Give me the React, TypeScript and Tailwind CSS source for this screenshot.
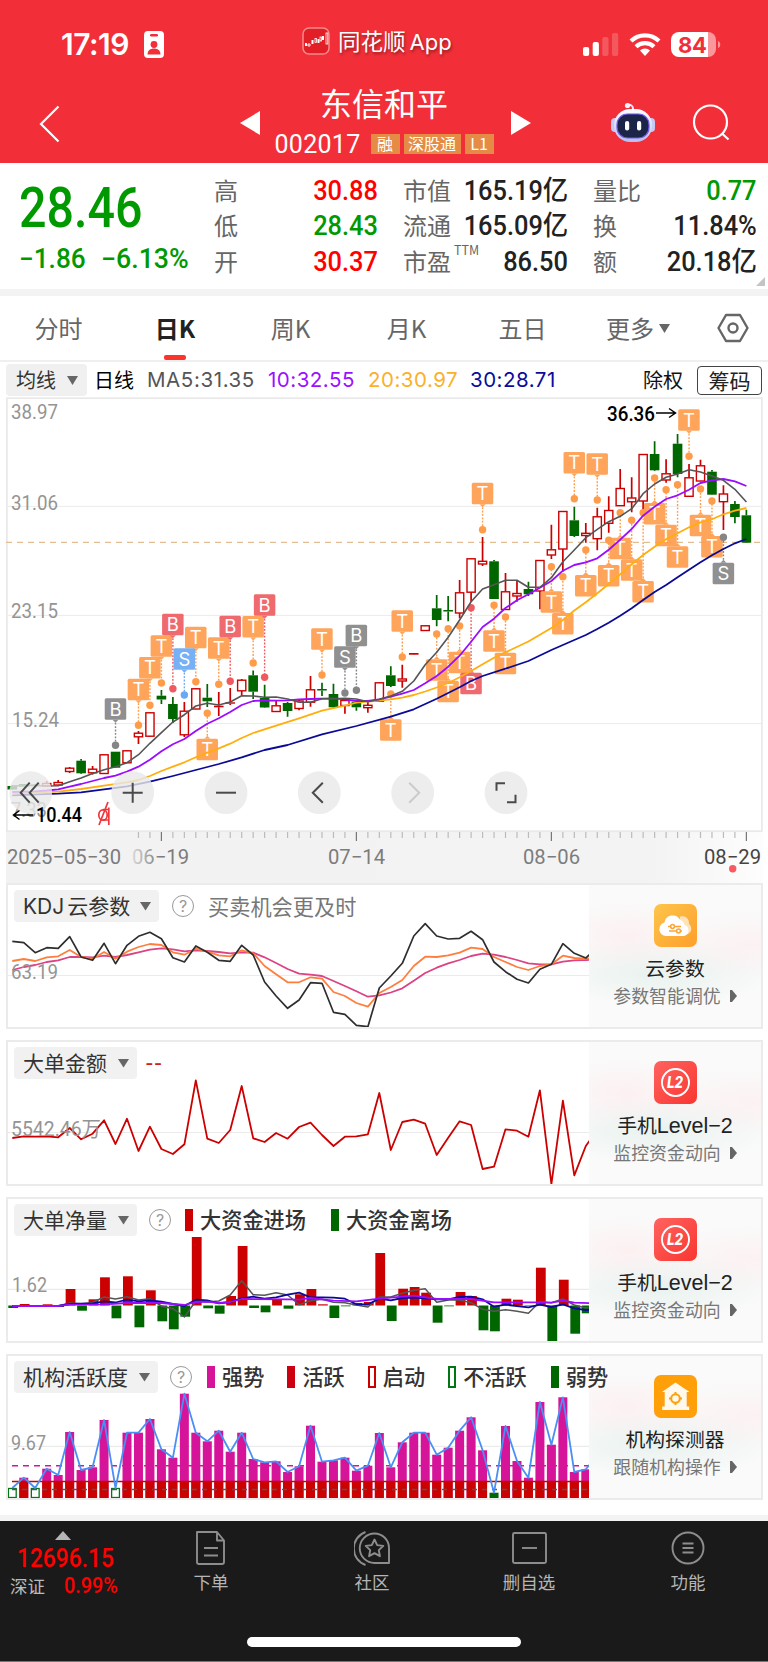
import type { ReactNode } from "react";

type Point = [number, number];
// r = rising (hollow), g = falling (filled): [kind, high, top, bottom, low]
type Candle = ["r" | "g", number, number, number, number];
// index, letter, colour, top of the box, centre of the dot
type Marker = [number, string, string, number, number];

const STEP = 11.47;
const cx = (i: number) => 12.3 + i * STEP;
const line = (ys: number[]) => ys.map((y, i) => `${cx(i).toFixed(1)},${y}`).join(" ");
const sparse = (ps: Point[]) => ps.map(([i, y]) => `${cx(i).toFixed(1)},${y}`).join(" ");

const RED = "#cc0000";
const GREEN = "#006600";
const ORANGE = "#ff9c4a";
const ROSE = "#ee5a60";
const GREY = "#858585";
const BLUE = "#69a8f4";
const MAGENTA = "#d6149a";

const candles: Candle[] = [
  ["g", 785, 786, 789.5, 790], ["g", 784, 784, 786.7, 787], ["g", 784, 784.5, 786, 787], ["r", 781, 783.5, 786, 787],
  ["r", 780, 782.5, 785, 785], ["r", 767, 768.2, 771.5, 773], ["g", 759, 760.7, 773.3, 774], ["r", 766, 769.2, 772.8, 774.5],
  ["r", 754, 754.8, 773.5, 774], ["g", 751.7, 751.7, 767.7, 768], ["r", 750, 750.8, 762.8, 763], ["r", 731, 733.2, 736.8, 744],
  ["r", 712, 712.8, 736.2, 737], ["g", 690, 695.7, 699.5, 704], ["g", 697, 704, 719, 723], ["r", 702, 711.2, 734.8, 737],
  ["r", 688, 688.8, 709, 709.3], ["g", 684, 697.7, 701.3, 707], ["r", 692, 705.7, 707.3, 716], ["r", 688, 702.3, 703.7, 705],
  ["r", 679, 680.2, 690.8, 695], ["g", 670.5, 675.3, 691.7, 699], ["g", 684.7, 698, 707.5, 708], ["r", 700, 705.8, 711.5, 712],
  ["g", 702, 703, 711, 716.7], ["r", 700, 701, 708.5, 710.3], ["r", 676, 689.8, 702.2, 706.7], ["g", 682.7, 689, 690.5, 696],
  ["g", 683.7, 694, 707.3, 708], ["r", 699, 700.5, 705.5, 713.7], ["g", 700, 701.7, 707.3, 710.7], ["r", 700, 705.3, 707.7, 712.7],
  ["r", 682, 682.8, 701.2, 702], ["g", 666.3, 675.3, 686, 687], ["r", 664.7, 679, 681, 687.7], ["r", 653, 653, 654.7, 655],
  ["r", 625, 625.8, 630.5, 631], ["g", 595, 608.3, 620, 626.3], ["g", 596, 610, 611.5, 621.3], ["r", 580, 592.8, 613, 618.3],
  ["r", 558, 558.8, 592.2, 601.7], ["r", 537, 561.3, 564, 566], ["g", 560, 561.3, 599, 599], ["r", 573, 591.8, 609.5, 610],
  ["r", 581, 593.5, 596, 601.7], ["g", 581.7, 589, 594.3, 596], ["r", 560, 560.5, 591, 609.3], ["r", 524.7, 549.8, 555, 559],
  ["r", 511, 511.5, 549, 571.7], ["g", 506.7, 520.3, 536, 537], ["r", 523, 533.3, 535.5, 542.7], ["r", 507.7, 516.8, 538.7, 550.3],
  ["r", 496.3, 510.5, 523.3, 532.7], ["r", 469, 488.5, 505.7, 506], ["r", 477.3, 498, 501.8, 512.3], ["r", 454, 454.5, 501, 511.7],
  ["g", 441.3, 454, 470.3, 471], ["r", 459.3, 473.8, 480, 482.7], ["g", 434, 443.7, 474, 477.3], ["r", 464, 477.8, 496.3, 497],
  ["r", 459.7, 465.8, 481, 481.3], ["g", 470, 471.7, 494.7, 495], ["r", 485.3, 494, 501.7, 530], ["g", 501, 504, 517, 523.3],
  ["g", 509.7, 515.3, 542.7, 543],
];

const ma5 = [
  786, 785.5, 785.5, 786, 785.7, 781.7, 778, 773.5, 769.7, 766.7, 762.7, 754.7, 743.3, 732.7, 722, 714.7, 706, 703.3, 705, 702,
  695.7, 696, 697.3, 697, 699, 702.3, 702.3, 698.7, 698.7, 698.3, 699, 701.7, 699.3, 696, 691.3, 681, 664.7, 652.3, 637.3, 620,
  601.7, 589, 584.7, 580.3, 580.3, 587.3, 587.3, 577.7, 561.7, 550, 537.7, 529.3, 521.7, 516.3, 508.7, 493.7, 484, 477.3, 474,
  469.7, 472, 476, 480.3, 489.3, 502,
];
const ma10 = [
  792, 791.7, 791.3, 790.5, 789.3, 786.7, 784, 781, 778, 775.7, 771.7, 766.7, 759.7, 751.3, 744.3, 739, 731, 723.7, 718.3, 712,
  705, 701, 700.5, 700.7, 700.3, 699.3, 699, 698.7, 698.3, 699.3, 701, 701, 699.3, 696.7, 693.7, 690, 683.3, 676, 666.7, 655.7,
  641.7, 627, 618.7, 608, 600.3, 594.3, 587.7, 581, 570.7, 565, 562.3, 558.3, 549.7, 539.7, 529, 515.7, 506.7, 499, 495.3, 489.7,
  483, 480.3, 479, 481.3, 486,
];
const ma20: Point[] = [
  [0, 793.7], [4, 791.7], [6, 789], [8, 785.7], [10, 782.3], [11, 780], [12, 776], [13, 771], [14, 766.7], [15, 762.3],
  [16, 757.3], [17, 752.7], [18, 748.3], [19, 743.7], [20, 738], [21, 733], [23, 725.7], [25, 718.3], [27, 710.7], [29, 705.7],
  [30, 702.7], [31, 701.7], [32, 700.7], [33, 699.3], [34, 697.7], [35, 695], [36, 691.5], [37, 687.5], [38, 683], [39, 677.3],
  [40, 671], [41, 664.3], [42, 657.7], [43, 652.3], [45, 641.5], [47, 628], [48, 620], [49, 610.5], [50, 602.3], [51, 593.3],
  [52, 584], [53, 574.3], [54, 564.3], [55, 555], [56, 546.7], [57, 539.3], [58, 533.3], [59, 527.3], [60, 522.3], [61, 519.3],
  [62, 514.3], [63, 510.7], [64, 508],
];
const ma30: Point[] = [
  [0, 795.3], [4, 793.7], [6, 792.3], [8, 789.3], [10, 786.3], [12, 781.7], [14, 776], [16, 770], [18, 764], [20, 757.3],
  [22, 750], [24, 745], [27, 734.3], [30, 726], [33, 716.7], [35, 709.3], [37, 698.7], [39, 687.3], [40, 681], [41, 676],
  [43, 668.7], [45, 661], [47, 650], [49, 640], [50, 635], [51, 629], [52, 622.7], [53, 615.7], [54, 608.3], [55, 600],
  [56, 592], [57, 585], [58, 577.3], [59, 569.7], [60, 562.3], [61, 555.3], [62, 549], [63, 543.3], [64, 539],
];

const markers: Marker[] = [
  [9, "B", GREY, 698.3, 745.3], [11, "T", ORANGE, 678.7, 725.3], [12, "T", ORANGE, 657, 705.3], [13, "T", ORANGE, 635.3, 683],
  [14, "B", ROSE, 613.7, 688.7], [16, "T", ORANGE, 626.7, 681.7], [15, "S", BLUE, 648.3, 695], [17, "T", ORANGE, 738.7, 713.3],
  [18, "T", ORANGE, 637.3, 684.3], [19, "B", ROSE, 615.7, 681.3], [21, "T", ORANGE, 616, 663], [22, "B", ROSE, 594.3, 677.3],
  [27, "T", ORANGE, 628.3, 675], [29, "S", GREY, 646.3, 693], [30, "B", GREY, 624.7, 690.3], [33, "T", ORANGE, 719.3, 694],
  [34, "T", ORANGE, 610.3, 657], [37, "T", ORANGE, 659.3, 634], [38, "T", ORANGE, 680.7, 628.7], [39, "T", ORANGE, 651.7, 626],
  [40, "B", ROSE, 672.7, 607.7], [41, "T", ORANGE, 482.7, 529.7], [42, "T", ORANGE, 630.3, 605.3], [43, "T", ORANGE, 652.7, 617],
  [47, "T", ORANGE, 591.3, 566.7], [48, "T", ORANGE, 613, 576.7], [49, "T", ORANGE, 452, 498.7], [50, "T", ORANGE, 575, 550],
  [51, "T", ORANGE, 453.3, 500], [52, "T", ORANGE, 565, 540.3], [53, "T", ORANGE, 537.7, 512.7], [54, "T", ORANGE, 559.3, 520.3],
  [55, "T", ORANGE, 581, 512.7], [56, "T", ORANGE, 503, 478], [57, "T", ORANGE, 524.7, 489.7], [58, "T", ORANGE, 546.3, 484.7],
  [59, "T", ORANGE, 409.3, 456.3], [60, "T", ORANGE, 514.7, 489], [61, "T", ORANGE, 536, 501], [62, "S", GREY, 562.7, 537.3],
];

const kdjJ = [
  941.3, 942.7, 952.7, 947.7, 948.3, 936.7, 957, 960.3, 943.3, 963.7, 945.3, 936.3, 932.3, 938.7, 957.7, 962, 946, 952.3, 960.3,
  961.3, 945.3, 955, 982, 996, 1008.3, 1000, 982.7, 983.3, 1012.3, 1014.3, 1025.3, 1026.7, 988, 976, 963.3, 936, 923.7, 936, 939,
  938.3, 931.3, 939.7, 962, 971.7, 979.3, 983, 969.3, 964.3, 943.7, 953.3, 958, 948,
];
const kdjK = [
  961, 959, 961, 957.3, 956.3, 950, 957, 959, 952, 958.7, 951.7, 947, 944, 945, 952.3, 954.7, 948.7, 951.7, 955.3, 956.3, 950.3,
  953.3, 966, 974.3, 982.3, 982.3, 977.3, 978.7, 992, 996, 1003, 1006.7, 993, 987, 980, 966, 956.7, 957, 955.3, 952.7, 947.7, 949,
  957, 962, 967, 970, 966, 964.3, 955.7, 958, 958.7, 958,
];
const kdjD = [
  970, 967, 965, 962, 960.3, 957, 957, 957.3, 955.7, 957, 955, 952.3, 949.7, 948.3, 949.3, 951.3, 950.3, 951, 952, 953.3, 952.3,
  952.7, 957.3, 963, 969, 973.7, 974.7, 976, 981, 986, 991.3, 996.7, 995.3, 992.5, 988.3, 980.7, 973, 967.7, 963.3, 960, 956,
  953.7, 954.7, 957, 960, 963.3, 964.3, 964.3, 961.7, 960.3, 960, 959.3,
];
const bigOrders = [
  1138, 1136.3, 1136.7, 1136.3, 1137.3, 1128, 1139.3, 1133.7, 1120.3, 1144, 1118.7, 1151, 1126.7, 1149, 1154, 1144.3, 1080.3,
  1138.7, 1143, 1130, 1086, 1138.3, 1142, 1133, 1138.7, 1127, 1122.7, 1135, 1146, 1136.7, 1136.3, 1134.3, 1093, 1150, 1122,
  1119.7, 1123.7, 1155, 1137.7, 1121.3, 1125, 1169, 1166.7, 1129.3, 1130.7, 1136.7, 1090.3, 1184, 1100.7, 1175.3, 1146, 1130,
];
const ZERO = 1305.5;
const netBars = [
  1308, 1304, 1305.5, 1304.3, 1307, 1289, 1310.7, 1299.3, 1277.3, 1318.3, 1276.3, 1327.3, 1290.3, 1321.3, 1329.3, 1316.7, 1237,
  1308.3, 1313.7, 1296, 1246, 1308, 1312.3, 1299.3, 1308.7, 1294.3, 1289, 1304.3, 1318, 1306.3, 1303, 1302, 1253, 1321, 1288.7,
  1287, 1292.7, 1322.7, 1306.3, 1292, 1296, 1330.3, 1331.3, 1298.7, 1299.7, 1305, 1267.7, 1341.3, 1279.7, 1333.7, 1313.3, 1308,
];
const netGrey = [
  1306, 1306, 1306, 1306, 1306, 1303, 1303.7, 1302.5, 1297, 1299, 1296.7, 1300, 1298.7, 1306, 1308.7, 1317, 1301, 1302, 1301, 1295,
  1280.7, 1294.7, 1295.3, 1292.7, 1295, 1304.7, 1300.7, 1299.3, 1302.3, 1302.7, 1305, 1307, 1297, 1297, 1293.3, 1290.3, 1288.7,
  1302.3, 1300, 1300, 1302.7, 1309.3, 1311.3, 1309.7, 1311.3, 1313.3, 1301.7, 1302.7, 1299, 1305, 1308, 1306,
];
const netBlue = [
  1306, 1306, 1306, 1306, 1306, 1304, 1303.7, 1303.3, 1301.3, 1302.5, 1299.7, 1301.3, 1300.3, 1301.7, 1304, 1306, 1299.7, 1300.3,
  1303.3, 1302, 1298.3, 1296.7, 1298.7, 1297.3, 1294.7, 1292.7, 1297.3, 1297.3, 1297.7, 1298.7, 1304.3, 1304.3, 1298.7, 1300.3,
  1298, 1297.7, 1298.3, 1299.3, 1299.3, 1297, 1296.7, 1299.3, 1306.7, 1304.7, 1306, 1307.3, 1304.7, 1307, 1304.3, 1308.3, 1310,
  1309,
];
const netPurple: Point[] = [
  [0, 1306], [4, 1306], [5, 1304.7], [8, 1304.3], [10, 1303], [13, 1303], [15, 1305], [16, 1302], [17, 1301.7], [18, 1303],
  [19, 1302], [20, 1299], [24, 1299.3], [25, 1299.7], [26, 1298], [28, 1300.7], [30, 1301.3], [32, 1298.7], [35, 1295.7],
  [37, 1299], [40, 1299], [42, 1302.3], [46, 1302.3], [47, 1302.7], [48, 1300.7], [49, 1302.7], [51, 1303.5],
];
const instTops = [
  1488, 1477.7, 1488, 1468.7, 1475, 1432, 1470, 1467.3, 1420, 1488, 1432.7, 1432.7, 1419, 1449.3, 1457.7, 1393.7, 1432.7, 1441.3,
  1430.7, 1451.7, 1432.7, 1459, 1462.3, 1461.3, 1472, 1466.3, 1425.7, 1461.7, 1460.3, 1457.7, 1470.7, 1465.7, 1433, 1467.3,
  1442.3, 1432.7, 1432.7, 1454.7, 1447.7, 1430.7, 1417.3, 1450.3, 1492.7, 1426, 1461, 1477.7, 1402, 1444.7, 1397.3, 1472, 1469.3,
  1455,
];

function Num({ children, className = "" }: { children: ReactNode; className?: string }) {
  return <span className={`inline-block whitespace-nowrap font-[Roboto,'Noto_Sans_CJK_SC',sans-serif] ${className}`}>{children}</span>;
}

function SvgNum({ x, y, w, fill = "#949494", size = 21, weight = 400, children }: {
  x: number; y: number; w: number; fill?: string; size?: number; weight?: number; children: ReactNode;
}) {
  return (
    <text x={x} y={y} fill={fill} fontSize={size} fontWeight={weight} textLength={w} lengthAdjust="spacingAndGlyphs" fontFamily="Roboto, 'Noto Sans CJK SC', sans-serif">
      {children}
    </text>
  );
}

function Line({ points, stroke, width = 1.8 }: { points: string; stroke: string; width?: number }) {
  return <polyline points={points} fill="none" stroke={stroke} strokeWidth={width} strokeLinejoin="round" />;
}

function StatusBar() {
  return (
    <div className="flex h-[87px] items-center text-white">
      <div className="ml-[61px] w-[74px] whitespace-nowrap text-[30px] leading-none font-semibold font-[Inter,sans-serif] tracking-[-0.5px]">17:19</div>
      <svg className="ml-[9px] mt-px" width="20" height="27" viewBox="0 0 20 27">
        <rect width="20" height="27" rx="4" fill="#fff" />
        <rect x="6" y="3" width="8" height="2.4" rx="1.2" fill="#f22f38" />
        <circle cx="10" cy="13.5" r="3.4" fill="#f22f38" />
        <path d="M3.5 23.5c0-4 2.8-6 6.500-6s6.500 2 6.500 6z" fill="#f22f38" />
      </svg>
      <svg className="ml-[138px] mb-1.5" width="28" height="28" viewBox="0 0 28 28">
        <rect x="1" y="1" width="26" height="26" rx="6" fill="#e21f26" stroke="#f58a8d" strokeWidth="1.5" />
        <path d="M4 19v-3M10.500 17v-4M16.500 16v-4M21 13V9" stroke="#fff" strokeWidth="2" />
        <circle cx="7" cy="18" r="1.200" fill="none" stroke="#fff" />
        <rect x="13" y="11.500" width="1.500" height="4" fill="none" stroke="#fff" strokeWidth="0.8" />
        <rect x="18" y="10" width="1.500" height="4" fill="none" stroke="#fff" strokeWidth="0.8" />
        <rect x="24" y="6" width="1.800" height="11" fill="none" stroke="#fff" strokeWidth="0.8" />
      </svg>
      <div className="ml-[8px] mb-1.5 w-[120px] whitespace-nowrap text-[22.500px] leading-none font-['Noto_Sans_CJK_SC',sans-serif] [text-shadow:1px_2px_3px_rgba(0,0,0,0.4)]">
        同花顺<span className="ml-1 font-[Inter] text-[22px]">App</span>
      </div>
      <svg className="ml-[125px]" width="140" height="28" viewBox="0 0 140 28">
        <rect x="0" y="17" width="6.200" height="9" rx="2" fill="#fff" />
        <rect x="9.700" y="12" width="6.200" height="14" rx="2" fill="#fff" />
        <rect x="19.300" y="7" width="6.200" height="19" rx="2" fill="#fff" opacity=".2" />
        <rect x="29" y="3" width="6.200" height="23" rx="2" fill="#fff" opacity=".2" />
        <g fill="none" stroke="#fff" strokeWidth="4.200">
          <path d="M48 11a20 20 0 0 1 28 0" />
          <path d="M53 16.800a13 13 0 0 1 18 0" />
        </g>
        <path d="M62 26l-5-5.500a7.500 7.500 0 0 1 10 0z" fill="#fff" />
        <path d="M96 2h29v25H96a8 8 0 0 1-8-8v-9a8 8 0 0 1 8-8z" fill="#fff" />
        <path d="M125 2a8 8 0 0 1 8 8v9a8 8 0 0 1-8 8z" fill="#fff" opacity=".5" />
        <path d="M135 11c3 1 3 6 0 7z" fill="#fff" opacity=".5" />
        <text x="95" y="22.500" fontSize="22" fontWeight="700" fontFamily="Inter" fill="#f22f38" textLength="29">84</text>
      </svg>
    </div>
  );
}

function Header() {
  return (
    <header className="h-[163px] bg-[#f22f38] text-white">
      <StatusBar />
      <div className="flex h-[74px]">
        <svg className="ml-[38px] mt-[17px]" width="24" height="40" viewBox="0 0 24 40" fill="none" stroke="#fff" strokeWidth="2.200">
          <path d="M20.500 2.500L3 20l17.500 17.500" />
        </svg>
        <svg className="ml-[178px] mt-[24px]" width="20" height="24"><path d="M0 12L20 0v24z" fill="#fff" /></svg>
        <div className="-mt-[3px] ml-[4px] flex w-[240px] flex-col items-center">
          <div className="text-[32px] leading-[36px]">东信和平</div>
          <div className="mt-[13px] flex h-[22px] items-center gap-1 whitespace-nowrap">
            <span className="mr-1.5 text-[25px] leading-none tracking-[0.300px] font-[Roboto]">002017</span>
            <span className="h-5 w-[29px] bg-[#e58b45] text-center text-[16px] leading-[19px]">融</span>
            <span className="h-5 w-[57px] bg-[#e58b45] text-center text-[16px] leading-[19px]">深股通</span>
            <span className="h-5 w-[29px] bg-[#e58b45] text-center text-[16px] leading-[19px]">L1</span>
          </div>
        </div>
        <svg className="ml-[7px] mt-[24px]" width="20" height="24"><path d="M20 12L0 0v24z" fill="#fff" /></svg>
        <svg className="ml-[80px] mt-[14px]" width="44" height="44" viewBox="0 0 44 44">
          <defs>
            <linearGradient id="bot" x1="0" y1="0" x2="0" y2="1">
              <stop offset="0" stopColor="#fff" /><stop offset="1" stopColor="#b9bdf0" />
            </linearGradient>
          </defs>
          <path d="M22 8c0-3-1-4-5-4.500" stroke="#e8e8fa" strokeWidth="2" fill="none" />
          <circle cx="16.500" cy="4.500" r="2.600" fill="#f3f3ff" />
          <rect x="0" y="17" width="8" height="14" rx="4" fill="#c5c8f3" />
          <rect x="36" y="17" width="8" height="14" rx="4" fill="#c5c8f3" />
          <rect x="3" y="8" width="38" height="33" rx="16" fill="url(#bot)" />
          <rect x="6" y="13" width="32" height="24" rx="10.500" fill="#1c2547" stroke="#7159e8" strokeWidth="1.200" />
          <rect x="14" y="20" width="4.200" height="9.500" rx="2.100" fill="#fff" />
          <rect x="26" y="20" width="4.200" height="9.500" rx="2.100" fill="#fff" />
        </svg>
        <svg className="ml-[37px] mt-[16px]" width="40" height="40" viewBox="0 0 40 40" fill="none" stroke="#fff" strokeWidth="2.200">
          <circle cx="18.500" cy="19" r="16.500" />
          <path d="M30 30.500l6.500 6" />
        </svg>
      </div>
    </header>
  );
}

function Quote({ label, sup, value, color }: { label: string; sup?: string; value: string; color: string }) {
  return (
    <div className="flex h-[35.500px] items-center justify-between">
      <span className="flex text-[24px] leading-none text-[#666]">
        {label}
        {sup && <sup className="ml-[3px] mt-px text-[12.500px] leading-none">{sup}</sup>}
      </span>
      <Num className={`mt-[3px] origin-right scale-x-[0.94] text-[27px] leading-none font-medium ${color}`}>{value}</Num>
    </div>
  );
}

function QuotePanel() {
  return (
    <section className="flex h-[126px] pt-[9px]">
      <div className="ml-[19px] w-[195px] text-[#009900]">
        <Num className="mt-[11px] block origin-left scale-x-[0.88] text-[55px] leading-[50px] font-medium">28.46</Num>
        <div className="mt-[13px] flex">
          <Num className="w-[82px] origin-left scale-x-[0.97] text-[27px] leading-none font-medium">−1.86</Num>
          <Num className="origin-left scale-x-[0.99] text-[27px] leading-none font-medium">−6.13%</Num>
        </div>
      </div>
      <div className="w-[164px]">
        <Quote label="高" value="30.88" color="text-[#ff0000]" />
        <Quote label="低" value="28.43" color="text-[#009900]" />
        <Quote label="开" value="30.37" color="text-[#ff0000]" />
      </div>
      <div className="ml-[25px] w-[165px]">
        <Quote label="市值" value="165.19亿" color="text-[#222]" />
        <Quote label="流通" value="165.09亿" color="text-[#222]" />
        <Quote label="市盈" sup="TTM" value="86.50" color="text-[#222]" />
      </div>
      <div className="ml-[25px] w-[164px]">
        <Quote label="量比" value="0.77" color="text-[#009900]" />
        <Quote label="换" value="11.84%" color="text-[#222]" />
        <Quote label="额" value="20.18亿" color="text-[#222]" />
      </div>
      <svg className="mt-[105px] ml-[-1px]" width="9" height="9"><path d="M9 0v9H0z" fill="#c4c4c4" /></svg>
    </section>
  );
}

function Tabs() {
  return (
    <nav className="flex h-[66px] border-b-2 border-[#efefef] text-[24px] leading-[64px] text-[#666]">
      <span className="w-[117px] text-center">分时</span>
      <span className="flex w-[116px] flex-col items-center font-bold text-[#222]">
        <span className="h-[59px]">日K</span>
        <span className="h-[6px] w-[22px] rounded-[2px] bg-[#fb342d]" />
      </span>
      <span className="w-[115px] text-center">周K</span>
      <span className="w-[117px] text-center">月K</span>
      <span className="w-[115px] text-center">五日</span>
      <span className="ml-[26px]">更多</span>
      <svg className="ml-[5px] mt-[28px]" width="11" height="9"><path d="M0 0h11L5.500 9z" fill="#666" /></svg>
      <svg className="ml-[47px] mt-[17px]" width="32" height="30" viewBox="0 0 32 30" fill="none" stroke="#666" strokeWidth="2.400">
        <path d="M9 2h14l7.500 13L23 28H9L1.500 15z" strokeLinejoin="round" />
        <circle cx="16" cy="15" r="4.500" />
      </svg>
    </nav>
  );
}

function MaRow() {
  return (
    <div className="flex h-[35px] items-center pt-px text-[20px] leading-none whitespace-nowrap">
      <div className="ml-[6px] flex h-[32px] w-[81px] items-center rounded bg-[#f0f0f0] pl-[10px] text-[#333]">
        均线
        <svg className="ml-[11px]" width="11" height="9"><path d="M0 0h11L5.500 9z" fill="#666" /></svg>
      </div>
      <div className="ml-[7px] w-[53px] text-black">日线</div>
      <div className="flex font-[Inter,sans-serif] text-[20.500px]">
        <div className="w-[121px] tracking-[0.600px] text-[#555]">MA5:31.35</div>
        <div className="w-[100px] tracking-[0.500px] text-[#9b10ff]">10:32.55</div>
        <div className="w-[102px] tracking-[0.500px] text-[#fbb02b]">20:30.97</div>
        <div className="w-[173px] tracking-[0.500px] text-[#0b0b9c]">30:28.71</div>
      </div>
      <div className="text-[#111]">除权</div>
      <div className="ml-[14px] flex h-[29px] w-[65px] items-center justify-center rounded-[4px] border-[1.500px] border-[#444] text-[21px] text-[#222]">筹码</div>
    </div>
  );
}

function MarkerTag({ m: [i, letter, color, top, dot] }: { m: Marker }) {
  const x = cx(i);
  const above = top < dot;
  const edge = above ? top + 21.5 : top;
  const tip = above ? edge + 3 : edge - 3;
  return (
    <g>
      <line x1={x} x2={x} y1={tip} y2={dot} stroke={color} strokeWidth="1.400" strokeDasharray="1.800 1.600" />
      <circle cx={x} cy={dot} r="3.700" fill={color} />
      <g opacity=".9">
        <rect x={x - 10.8} y={top} width="21.500" height="21.500" rx="1.500" fill={color} />
        <path d={`M${x - 3} ${edge}h6L${x} ${tip}z`} fill={color} />
      </g>
      <text x={x} y={top + 17.3} textAnchor="middle" fontSize="18.500" fill="#fff" fontFamily="Inter, sans-serif">{letter}</text>
    </g>
  );
}

function RoundButton({ x, children, color = "#4a4a4a" }: { x: number; children: ReactNode; color?: string }) {
  return (
    <g transform={`translate(${x} 792.700)`}>
      <circle r="21.400" fill="#e8e8e8" opacity=".8" />
      <g fill="none" stroke={color} strokeWidth="2">{children}</g>
    </g>
  );
}

function KLineChart() {
  return (
    <svg className="block" width="768" height="486" viewBox="0 397 768 486">
      <defs>
        <linearGradient id="axis" x1="0" x2="1" y1="0" y2="0">
          <stop offset="0" stopColor="#f2f2f2" /><stop offset=".85" stopColor="#f3f3f3" /><stop offset="1" stopColor="#fdfdfd" />
        </linearGradient>
        <linearGradient id="fade" x1="0" x2="1" y1="0" y2="0">
          <stop offset="0" stopColor="#f2f2f2" /><stop offset=".25" stopColor="#f2f2f2" stopOpacity=".8" /><stop offset="1" stopColor="#f2f2f2" stopOpacity="0" />
        </linearGradient>
      </defs>
      <rect x="6" y="831" width="757" height="52" fill="url(#axis)" />
      <rect x="6.900" y="398.200" width="755" height="433" fill="#fff" stroke="#e9e9e9" strokeWidth="1.700" />
      {[506.4, 615.4, 723.6].map((y) => <line key={y} x1="8" x2="761" y1={y} y2={y} stroke="#ebebeb" />)}
      <line x1="6" x2="761" y1="542.400" y2="542.400" stroke="#e3bd94" strokeWidth="1.200" strokeDasharray="6 5" />
      <SvgNum x={11} y={419.2} w={47}>38.97</SvgNum>
      <SvgNum x={11} y={509.5} w={47}>31.06</SvgNum>
      <SvgNum x={11} y={618} w={47}>23.15</SvgNum>
      <SvgNum x={12} y={727} w={47}>15.24</SvgNum>
      <SvgNum x={11} y={817} w={36}>7.33</SvgNum>

      {candles.map(([kind, hi, top, bottom, lo], i) => {
        const x = cx(i);
        const color = kind === "r" ? RED : GREEN;
        return (
          <g key={i} stroke={color}>
            <path d={`M${x} ${hi}V${top}M${x} ${bottom}V${lo}`} strokeWidth="1.700" fill="none" />
            {kind === "g" || bottom - top < 2
              ? <rect x={x - 4.8} y={top} width="9.600" height={bottom - top} fill={color} stroke="none" />
              : <rect x={x - 4.1} y={top} width="8.200" height={bottom - top} fill="#fff" strokeWidth="1.400" />}
          </g>
        );
      })}
      {markers.map((m) => <MarkerTag key={m[0]} m={m} />)}
      <Line points={sparse(ma30)} stroke="#0a0a96" />
      <Line points={sparse(ma20)} stroke="#ffae0c" />
      <Line points={line(ma10)} stroke="#9a0cff" />
      <Line points={line(ma5)} stroke="#555" width={1.6} />

      <SvgNum x={607} y={421} w={48} fill="#000" weight={500}>36.36</SvgNum>
      <path d="M656 413h19M669 408.500l6.500 4.500-6.500 4.500" fill="none" stroke="#000" strokeWidth="1.500" />

      <RoundButton x={30.7}><path d="M-1-10L-10 0-1 10M8-10L-1 0 8 10" /></RoundButton>
      <RoundButton x={132.7}><path d="M-10 0H10M0-10V10" /></RoundButton>
      <RoundButton x={226}><path d="M-10 0H10" /></RoundButton>
      <RoundButton x={319.3}><path d="M3.500-10L-6.500 0 3.500 10" /></RoundButton>
      <RoundButton x={412.7} color="#cbcbcb"><path d="M-3.500-10L6.500 0-3.500 10" /></RoundButton>
      <RoundButton x={506}><path d="M-9.500-2V-9.500H-1M9.500 2V9.500H1" /></RoundButton>

      <path d="M33 815H14M19.500 810.500l-6 4.500 6 4.500" fill="none" stroke="#000" strokeWidth="1.500" />
      <SvgNum x={36} y={822} w={46} fill="#000" weight={500}>10.44</SvgNum>
      <g fill="none" stroke="#f0343a" strokeWidth="1.700">
        <ellipse cx="103" cy="815" rx="4.200" ry="5.200" />
        <path d="M108.800 807.500V825M99 825l9-23M103 809.500h5.800M103 820h5.800" />
      </g>

      {candles.map((_, i) => i > 10 && (
        <line key={i} x1={cx(i)} x2={cx(i)} y1="832" y2={(i - 13) % 17 === 0 ? 841 : 838} stroke={(i - 13) % 17 === 0 ? "#777" : "#bbb"} strokeWidth="1.200" />
      ))}
      <SvgNum x={132} y={863.5} w={57} fill="#7c7c7c">06−19</SvgNum>
      <rect x="122" y="842" width="38" height="36" fill="url(#fade)" />
      <SvgNum x={7} y={863.5} w={114} fill="#7c7c7c">2025−05−30</SvgNum>
      <SvgNum x={328} y={863.5} w={57} fill="#7c7c7c">07−14</SvgNum>
      <SvgNum x={523} y={863.5} w={57} fill="#7c7c7c">08−06</SvgNum>
      <SvgNum x={704} y={863.5} w={57} fill="#444">08−29</SvgNum>
      <circle cx="732.700" cy="868.800" r="3.700" fill="#fa5a5f" />
    </svg>
  );
}

function Chip({ label, width }: { label: ReactNode; width: string }) {
  return (
    <div className={`ml-[6px] flex h-8 shrink-0 items-center justify-between rounded bg-[#f1f1f1] pl-[9px] pr-[8px] ${width}`}>
      <span className="-mt-px">{label}</span>
      <svg width="11" height="9"><path d="M0 0h11L5.500 8.500z" fill="#666" /></svg>
    </div>
  );
}

function Help({ className }: { className: string }) {
  return (
    <span className={`flex size-[22px] shrink-0 items-center justify-center rounded-full border-[1.500px] border-[#999] text-[16px] leading-none text-[#999] font-[Inter] ${className}`}>?</span>
  );
}

function Legend({ label, fill, className }: { label: string; fill: string; className: string }) {
  return (
    <span className={`-mt-[3px] flex items-center text-[21.200px] ${className}`}>
      <span className={`mt-[3px] mr-[7px] h-[22px] w-[8px] ${fill}`} />
      <span className="font-medium">{label}</span>
    </span>
  );
}

function Promo({ icon, title, subtitle }: { icon: ReactNode; title: ReactNode; subtitle: string }) {
  return (
    <div className="col-start-2 row-start-1 flex flex-col items-center bg-[#fafafa] bg-[radial-gradient(ellipse_75px_34px_at_22%_36%,rgba(255,228,230,0.45),transparent),radial-gradient(ellipse_100px_34px_at_95%_42%,rgba(255,228,230,0.4),transparent),radial-gradient(ellipse_120px_34px_at_40%_62%,rgba(228,240,236,0.8),transparent)] pt-[19px] whitespace-nowrap">
      <svg width="43" height="43" viewBox="0 0 43 43">{icon}</svg>
      <div className="mt-[11px] text-[19.800px] leading-[22px] text-[#222] font-['Liberation_Sans','Noto_Sans_CJK_SC',sans-serif]">{title}</div>
      <div className="mt-[5px] flex items-center text-[17.900px] leading-[20px] text-[#777]">
        {subtitle}
        <svg className="mt-px ml-[9px]" width="7" height="12"><path d="M0 0h2l5 6-5 6H0z" fill="#666" /></svg>
      </div>
    </div>
  );
}

function Panel({ top, grid, header, promo, children }: {
  top: number; grid: number; header: ReactNode; promo: ReactNode; children: ReactNode;
}) {
  return (
    <section className="ml-[6px] grid h-[146px] w-[757px] grid-cols-[581px_172px] border-2 border-[#ebebeb] text-[21px] leading-none whitespace-nowrap text-[#333]">
      <svg className="col-start-1 row-start-1" width="581" height="142" viewBox={`8 ${top + 2} 581 142`}>
        <line x1="8" x2="589" y1={grid} y2={grid} stroke="#ebebeb" strokeWidth="1.200" />
        {children}
      </svg>
      {promo}
      <div className="z-10 col-span-2 col-start-1 row-start-1 flex h-[42px] items-center">{header}</div>
    </section>
  );
}

const cloudIcon = (
  <>
    <defs><linearGradient id="cloud" x1="0" y1="0" x2="1" y2="1"><stop stopColor="#fdc54c" /><stop offset="1" stopColor="#fd9f2b" /></linearGradient></defs>
    <rect width="43" height="43" rx="7" fill="url(#cloud)" />
    <path d="M26 12.500a7 7 0 0 1 9 7.500 6 6 0 0 1-1 10h-9z" fill="#ffe2b5" />
    <path d="M12 32a6.800 6.800 0 0 1-1.500-13.400 8.300 8.300 0 0 1 15.500-2.800 7 7 0 0 1 4.500 5.200 5.700 5.700 0 0 1-.500 11z" fill="#fff" />
    <g stroke="#fca535" strokeWidth="1.500" fill="#fff"><path d="M14 22.500h13M15 27h13" /><circle cx="18.500" cy="22.500" r="1.900" /><circle cx="24.500" cy="27" r="1.900" /></g>
  </>
);
const l2Icon = (id: string) => (
  <>
    <defs><linearGradient id={id} x1="0" y1="0" x2="1" y2="1"><stop stopColor="#ff6360" /><stop offset="1" stopColor="#f93630" /></linearGradient></defs>
    <rect width="43" height="43" rx="7" fill={`url(#${id})`} />
    <circle cx="21.500" cy="21.500" r="13.500" fill="none" stroke="#fff" strokeWidth="1.900" />
    <text x="21" y="27" textAnchor="middle" fontSize="15.500" fontWeight="800" fontStyle="italic" fontFamily="Inter, sans-serif" fill="#fff" textLength="16" lengthAdjust="spacingAndGlyphs">L2</text>
  </>
);
const houseIcon = (
  <>
    <rect width="43" height="43" rx="7" fill="#ff9f0a" />
    <path d="M21.500 7.500L35.500 17h-2.800v14.500h2.500v3.500H8.200v-3.500h2.500V17H8z" fill="#fff8ec" />
    <g fill="none" stroke="#ff9f0a" strokeWidth="2"><circle cx="21.500" cy="23.500" r="4.300" /><path d="M21.500 17v3M21.500 27v3M15 23.500h3M25 23.500h3" /></g>
  </>
);
const level2Title = <>手机<span className="text-[21.500px]">Level−2</span></>;

function Indicators() {
  return (
    <div className="flex flex-col gap-[11px]">
      <Panel
        top={883} grid={975.5}
        header={<>
          <Chip label={<><span className="mr-[3px] font-[Inter]">KDJ</span>云参数</>} width="w-[145px]" />
          <Help className="ml-[13px]" /><span className="-mt-px ml-[14px] text-[21.200px] text-[#777]">买卖机会更及时</span>
        </>}
        promo={<Promo icon={cloudIcon} title="云参数" subtitle="参数智能调优" />}
      >
        <Line points={line(kdjD)} stroke="#dc4284" />
        <Line points={line(kdjK)} stroke="#ff7e3e" />
        <Line points={line(kdjJ)} stroke="#2e2e2e" width={1.7} />
        <SvgNum x={11} y={978.5} w={47}>63.19</SvgNum>
      </Panel>
      <Panel
        top={1040} grid={1132.5}
        header={<><Chip label="大单金额" width="w-[123px]" /><span className="ml-[9px] text-[24px] tracking-[2px] text-[#cc2222] font-[Roboto]">--</span></>}
        promo={<Promo icon={l2Icon("l2a")} title={level2Title} subtitle="监控资金动向" />}
      >
        <Line points={line(bigOrders)} stroke={RED} />
        <SvgNum x={11} y={1135.5} w={90}>5542.46万</SvgNum>
      </Panel>
      <Panel
        top={1197} grid={1289.4}
        header={<>
          <Chip label="大单净量" width="w-[123px]" /><Help className="ml-[12px]" />
          <Legend label="大资金进场" fill="bg-[#cc0000]" className="ml-[14px]" />
          <Legend label="大资金离场" fill="bg-[#006600]" className="ml-[25px]" />
        </>}
        promo={<Promo icon={l2Icon("l2b")} title={level2Title} subtitle="监控资金动向" />}
      >
        {netBars.map((y, i) => (
          <rect key={i} x={cx(i) - 4} y={Math.min(y, ZERO)} width="9.800" height={Math.abs(y - ZERO)} fill={y < ZERO ? RED : GREEN} />
        ))}
        <Line points={line(netGrey)} stroke="#555" width={1.5} />
        <Line points={line(netBlue)} stroke="#0a0a96" />
        <Line points={sparse(netPurple)} stroke="#9a0cff" />
        <SvgNum x={12} y={1292} w={35}>1.62</SvgNum>
      </Panel>
      <Panel
        top={1354} grid={1446.4}
        header={<>
          <Chip label="机构活跃度" width="w-[144px]" /><Help className="ml-[12px]" />
          <Legend label="强势" fill="bg-[#d6149a]" className="ml-[15px]" />
          <Legend label="活跃" fill="bg-[#cc0011]" className="ml-[23px]" />
          <Legend label="启动" fill="border-2 border-[#cc0000]" className="ml-[23px]" />
          <Legend label="不活跃" fill="border-2 border-[#007714]" className="ml-[23px]" />
          <Legend label="弱势" fill="bg-[#006600]" className="ml-[24px]" />
        </>}
        promo={<Promo icon={houseIcon} title="机构探测器" subtitle="跟随机构操作" />}
      >
        <line x1="12" x2="589" y1="1465.700" y2="1465.700" stroke={MAGENTA} strokeWidth="1.400" strokeDasharray="6 5" />
        {instTops.map((y, i) => {
          const x = cx(i) - 4.5;
          if (y === 1488) return <rect key={i} x={x + 0.6} y={1488.5} width="7.800" height="9" fill="#fff" stroke="#007714" strokeWidth="1.300" />;
          if (y > 1490) return <rect key={i} x={x} y={y} width="9" height={1498.7 - y} fill={GREEN} />;
          return (
            <g key={i}>
              <rect x={x} y={y} width="9" height={1498.7 - y} fill={MAGENTA} />
              <rect x={x} y={1481.3} width="9" height={17.4} fill={RED} />
            </g>
          );
        })}
        <line x1="12" x2="589" y1="1481.500" y2="1481.500" stroke={RED} strokeWidth="1.300" />
        <line x1="12" x2="589" y1="1489.500" y2="1489.500" stroke="#555" strokeWidth="1.300" strokeDasharray="5 5" />
        <Line points={line(instTops)} stroke="#4a8ff5" />
        <SvgNum x={11} y={1449.5} w={35}>9.67</SvgNum>
      </Panel>
    </div>
  );
}

function NavItem({ label, className, children }: { label: string; className: string; children: ReactNode }) {
  return (
    <div className={`flex flex-col items-center pt-[9px] text-[17.500px] leading-none text-[#b5b5b5] ${className}`}>
      <svg width="36" height="36" viewBox="0 0 36 36" fill="none" stroke="#8d8d8d" strokeWidth="1.900" strokeLinejoin="round">{children}</svg>
      <span className="mt-[7px]">{label}</span>
    </div>
  );
}

function BottomBar() {
  return (
    <footer className="flex h-[141px] flex-col items-center justify-between border-b border-[#777] bg-[#1a1a1a]">
      <div className="flex w-full">
        <div className="w-[127px] pt-[10px] text-[#ff0000]">
          <svg className="ml-[55px]" width="16" height="9"><path d="M8 0l8 9H0z" fill="#b5b5b5" /></svg>
          <Num className="ml-[17px] mt-[5px] origin-left scale-x-[0.91] text-[25px] leading-[28px] font-medium">12696.15</Num>
          <div className="mt-[2px] flex items-center leading-[22px]">
            <span className="ml-[10px] w-[54px] text-[17.500px] text-[#bbb]">深证</span>
            <Num className="origin-left scale-x-[0.9] text-[22px] font-medium">0.99%</Num>
          </div>
        </div>
        <NavItem label="下单" className="ml-[49px] w-[70px]">
          <path d="M4 2h20l7 8.500V32a2 2 0 0 1-2 2H6a2 2 0 0 1-2-2zM24 2v8.500h7M11 18h14M11 25.500h14" />
        </NavItem>
        <NavItem label="社区" className="ml-[90px] w-[72px]">
          <path d="M20.500 3.500A14.500 14.500 0 0 0 20.500 33H35V18A14.500 14.500 0 0 0 20.500 3.500zM11.500 2a17.500 17.500 0 0 0 0 33" />
          <path d="M20.500 9.500l2.700 5.600 6.100.8-4.500 4.200 1.100 6.100-5.400-3-5.400 3 1.100-6.100-4.500-4.200 6.100-.8z" />
        </NavItem>
        <NavItem label="删自选" className="ml-[85px] w-[72px]">
          <rect x="2" y="3" width="33" height="30" rx="1.500" /><path d="M11 18h15" />
        </NavItem>
        <NavItem label="功能" className="ml-[87px] w-[72px]">
          <circle cx="18" cy="18" r="15.500" /><path d="M12.500 13.500h11M12.500 18h11M12.500 22.500h11" />
        </NavItem>
      </div>
      <div className="mb-[14px] h-[10px] w-[274px] rounded-full bg-white" />
    </footer>
  );
}

export default function App() {
  return (
    <div className="h-[1662px] w-[768px] overflow-hidden bg-white font-['Noto_Sans_CJK_SC',sans-serif]">
      <Header />
      <QuotePanel />
      <div className="h-[7px] bg-[#f3f3f3]" />
      <Tabs />
      <MaRow />
      <KLineChart />
      <Indicators />
      <div className="mt-[15px] h-[6px] bg-[#f3f3f3]" />
      <BottomBar />
    </div>
  );
}
